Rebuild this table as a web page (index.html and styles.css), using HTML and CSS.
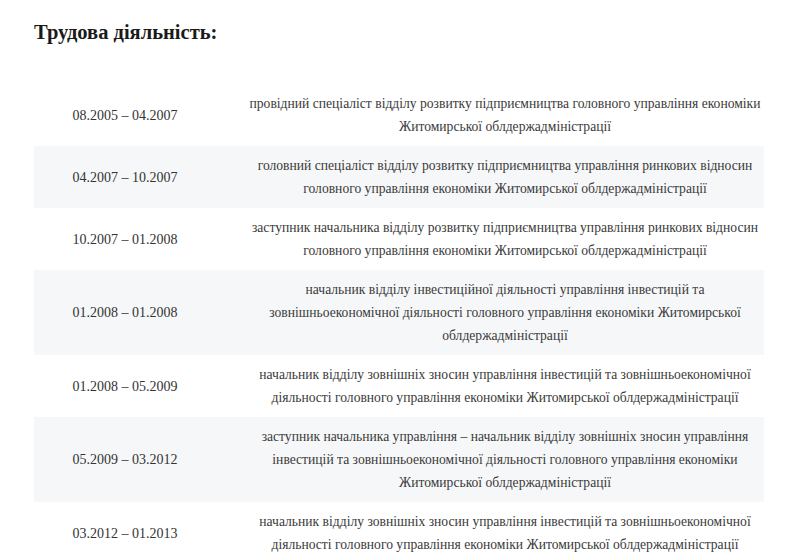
FILE: index.html
```html
<!DOCTYPE html>
<html lang="uk">
<head>
<meta charset="utf-8">
<link rel="stylesheet" href="styles.css">
</head>
<body>
<section class="career">
  <h2 class="career-title">Трудова діяльність:</h2>
  <div class="career-table">
    <div class="row">
      <div class="date">08.2005 – 04.2007</div>
      <div class="desc">провідний спеціаліст відділу розвитку підприємництва головного управління економіки Житомирської облдержадміністрації</div>
    </div>
    <div class="row alt">
      <div class="date">04.2007 – 10.2007</div>
      <div class="desc">головний спеціаліст відділу розвитку підприємництва управління ринкових відносин головного управління економіки Житомирської облдержадміністрації</div>
    </div>
    <div class="row">
      <div class="date">10.2007 – 01.2008</div>
      <div class="desc">заступник начальника відділу розвитку підприємництва управління ринкових відносин головного управління економіки Житомирської облдержадміністрації</div>
    </div>
    <div class="row alt">
      <div class="date">01.2008 – 01.2008</div>
      <div class="desc">начальник відділу інвестиційної діяльності управління інвестицій та зовнішньоекономічної діяльності головного управління економіки Житомирської облдержадміністрації</div>
    </div>
    <div class="row">
      <div class="date">01.2008 – 05.2009</div>
      <div class="desc">начальник відділу зовнішніх зносин управління інвестицій та зовнішньоекономічної діяльності головного управління економіки Житомирської облдержадміністрації</div>
    </div>
    <div class="row alt">
      <div class="date">05.2009 – 03.2012</div>
      <div class="desc">заступник начальника управління – начальник відділу зовнішніх зносин управління інвестицій та зовнішньоекономічної діяльності головного управління економіки Житомирської облдержадміністрації</div>
    </div>
    <div class="row">
      <div class="date">03.2012 – 01.2013</div>
      <div class="desc">начальник відділу зовнішніх зносин управління інвестицій та зовнішньоекономічної діяльності головного управління економіки Житомирської облдержадміністрації</div>
    </div>
  </div>
</section>
</body>
</html>
```

FILE: styles.css
```css
html, body {
  margin: 0;
  padding: 0;
  background: #ffffff;
}

.career {
  padding: 20px 30px 0 34px;
  font-family: "Liberation Serif", serif;
  color: #333333;
}

.career-title {
  margin: 0 0 40px 0;
  font-size: 20.5px;
  line-height: 24px;
  font-weight: bold;
  color: #1a1a1a;
}

.career-table {
  display: flex;
  flex-direction: column;
}

.row {
  display: grid;
  grid-template-columns: 182px 1fr;
  align-items: center;
  padding: 8px 0;
}

.row.alt {
  background: #f6f7f9;
}

.date {
  text-align: center;
  font-size: 14px;
  line-height: 23px;
}

.desc {
  padding-left: 30px;
  text-align: center;
  font-size: 13.6px;
  line-height: 23px;
  color: #3a3a3a;
}
```
